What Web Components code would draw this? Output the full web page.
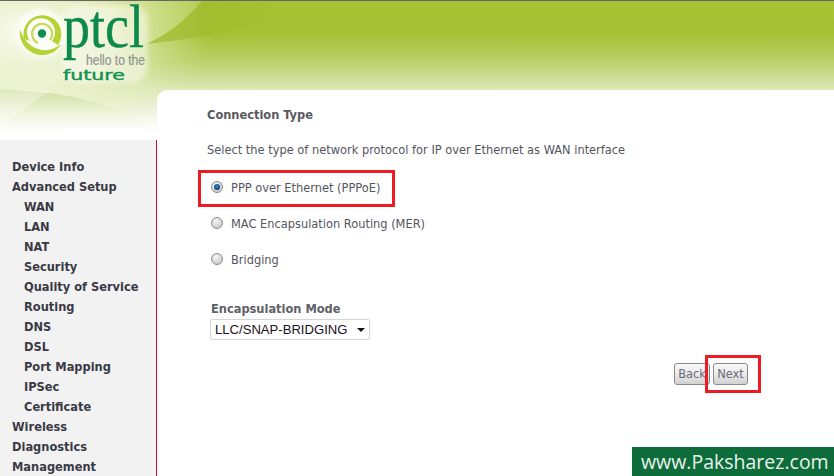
<!DOCTYPE html>
<html>
<head>
<meta charset="utf-8">
<title>PTCL Connection Type</title>
<style>
html, body { margin: 0; height: 100%; overflow: hidden; background: #fff; }
</style>
</head>
<body>
<router-page>
  <ptcl-logo slot="logo"></ptcl-logo>
  <side-menu slot="menu">
    <menu-link>Device Info</menu-link>
    <menu-link>Advanced Setup</menu-link>
    <menu-link sub>WAN</menu-link>
    <menu-link sub>LAN</menu-link>
    <menu-link sub>NAT</menu-link>
    <menu-link sub>Security</menu-link>
    <menu-link sub>Quality of Service</menu-link>
    <menu-link sub>Routing</menu-link>
    <menu-link sub>DNS</menu-link>
    <menu-link sub>DSL</menu-link>
    <menu-link sub>Port Mapping</menu-link>
    <menu-link sub>IPSec</menu-link>
    <menu-link sub>Certificate</menu-link>
    <menu-link>Wireless</menu-link>
    <menu-link>Diagnostics</menu-link>
    <menu-link>Management</menu-link>
  </side-menu>
  <connection-form slot="main"></connection-form>
</router-page>

<script>
// Page frame: green header behind, menu on the left, white panel on the right.
const pageTemplate = document.createElement('template')
pageTemplate.innerHTML = `
<style>
:host {
  display: grid;
  grid-template-columns: 157px 1fr;
  width: 834px;
  height: 476px;
  overflow: hidden;
  position: relative;
  box-sizing: border-box;
  border-top: 1px solid #666;
  font-family: "DejaVu Sans", Verdana, sans-serif;
  font-stretch: condensed;
  background: #fff;
}
#art { position: absolute; left: 0; top: 0; }
#left { display: flex; flex-direction: column; min-height: 0; position: relative; }
#head { height: 139px; flex: none; position: relative; }
#nav {
  flex: 1;
  min-height: 0;
  background: #f2f2f2;
  border-right: 1px solid #c8102e;
}
#panel {
  margin-top: 89px;
  background: #fff;
  border-top-left-radius: 10px;
  position: relative;
}
</style>
<svg id="art" width="834" height="135" viewBox="0 0 834 135">
  <defs>
    <linearGradient id="sky" x1="0" y1="0" x2="0" y2="1">
      <stop offset="0" stop-color="#a9c337"></stop>
      <stop offset=".24" stop-color="#a6c133"></stop>
      <stop offset=".45" stop-color="#bcd06a"></stop>
      <stop offset=".66" stop-color="#dfe8b8"></stop>
      <stop offset=".96" stop-color="#ffffff"></stop>
    </linearGradient>
    <radialGradient id="glow" gradientUnits="userSpaceOnUse" cx="0" cy="0" r="1"
      gradientTransform="translate(25 30) scale(185 105)">
      <stop offset="0" stop-color="#ffffff" stop-opacity=".95"></stop>
      <stop offset=".5" stop-color="#f6f9e2" stop-opacity=".72"></stop>
      <stop offset="1" stop-color="#e8f0c0" stop-opacity="0"></stop>
    </radialGradient>
    <linearGradient id="low" x1="0" y1="0" x2="0" y2="1">
      <stop offset="0" stop-color="#cfdc9c"></stop>
      <stop offset=".55" stop-color="#eef3d8"></stop>
      <stop offset="1" stop-color="#ffffff"></stop>
    </linearGradient>
    <linearGradient id="crescent" gradientUnits="userSpaceOnUse" x1="146" y1="0" x2="300" y2="0">
      <stop offset="0" stop-color="#99b524" stop-opacity=".65"></stop>
      <stop offset="1" stop-color="#99b524" stop-opacity="0"></stop>
    </linearGradient>
  </defs>
  <rect width="834" height="135" fill="url(#sky)"></rect>
  <path d="M146 43 C172 32 190 14 202 0 L130 0 L130 43 Z" fill="#c6d877" opacity=".5"></path>
  <rect width="300" height="135" fill="url(#glow)"></rect>
  <path d="M146 43 C172 32 190 14 202 0 L300 0 L300 8 C262 24 208 37 146 43 Z" fill="url(#crescent)"></path>
  <path d="M0 88 C60 90 120 102 157 130 L0 130 Z" fill="url(#low)"></path>
  <path d="M0 88 C22 88 36 89 50 90 C34 100 20 112 0 124 Z" fill="#ffffff" opacity=".35"></path>
</svg>
<div id="left">
  <div id="head"><slot name="logo"></slot></div>
  <div id="nav"><slot name="menu"></slot></div>
</div>
<div id="panel"><slot name="main"></slot></div>
<slot></slot>
`

customElements.define('router-page',
  /**
   * The whole router page.
   */
  class extends HTMLElement {
    constructor () {
      super()
      this.attachShadow({ mode: 'open' })
        .appendChild(pageTemplate.content.cloneNode(true))
    }
  }
)

// The logo. Swirl is drawn, the words stay real text.
const logoTemplate = document.createElement('template')
logoTemplate.innerHTML = `
<style>
:host { display: block; position: absolute; left: 0; top: 0; width: 157px; height: 90px; }
svg { display: block; overflow: visible; }
text { font-stretch: normal; }
.ptcl { font-family: "Liberation Serif", serif; font-size: 61px; fill: #0d8a4b; stroke: #0d8a4b; stroke-width: .4px; }
.hello { font-family: "Liberation Sans", sans-serif; font-size: 14px; fill: #8f9490; stroke: #8f9490; stroke-width: .2px; }
.future { font-family: "DejaVu Sans", sans-serif; font-size: 14px; fill: #11924f; stroke: #11924f; stroke-width: .4px; }
</style>
<svg width="157" height="90" viewBox="0 0 157 90">
  <defs>
    <filter id="blur" x="-20%" y="-20%" width="140%" height="140%">
      <feGaussianBlur stdDeviation="2.5"></feGaussianBlur>
    </filter>
  </defs>
  <circle cx="41" cy="32" r="24" fill="#fff" opacity=".8" filter="url(#blur)"></circle>
  <rect x="62" y="4" width="86" height="78" rx="16" fill="#fff" opacity=".45" filter="url(#blur)"></rect>
  <path d="M24 38 A19 19 0 1 1 58 44 L52 40 A14 14 0 1 0 30 40 Z" fill="#b5d334"></path>
  <path d="M20 28 C18 44 31 55 44 54 C52 53 58 49 61 43 C55 48 46 51 38 48 C29 45 23 38 20 28 Z" fill="#b5d334"></path>
  <path d="M38 42 A10 10 0 1 1 50 39" fill="none" stroke="#c5dc5a" stroke-width="2.2"></path>
  <circle cx="42" cy="32.5" r="4.2" fill="#0f8e4e"></circle>
  <text class="ptcl" x="63" y="45.5" textLength="81" lengthAdjust="spacingAndGlyphs">ptcl</text>
  <text class="hello" x="86" y="64" textLength="59" lengthAdjust="spacingAndGlyphs">hello to the</text>
  <text class="future" x="63" y="79" textLength="62" lengthAdjust="spacingAndGlyphs">future</text>
</svg>
`

customElements.define('ptcl-logo',
  /**
   * The ptcl logo.
   */
  class extends HTMLElement {
    constructor () {
      super()
      this.attachShadow({ mode: 'open' })
        .appendChild(logoTemplate.content.cloneNode(true))
    }
  }
)

customElements.define('side-menu',
  /**
   * Holds the menu links.
   */
  class extends HTMLElement {
    constructor () {
      super()
      this.attachShadow({ mode: 'open' }).innerHTML = `
        <style>
        :host { display: block; padding-top: 17px; }
        </style>
        <slot></slot>`
    }
  }
)

customElements.define('menu-link',
  /**
   * One line of the menu, sub items are indented.
   */
  class extends HTMLElement {
    constructor () {
      super()
      this.attachShadow({ mode: 'open' }).innerHTML = `
        <style>
        :host {
          display: block;
          height: 20px;
          padding-left: 12px;
          font: bold 12.7px/20px "DejaVu Sans", Verdana, sans-serif;
          font-stretch: condensed;
          color: #3a3a46;
          white-space: nowrap;
        }
        :host([sub]) { padding-left: 24px; }
        </style>
        <slot></slot>`
    }
  }
)

customElements.define('radio-row',
  /**
   * A radio button with its label.
   */
  class extends HTMLElement {
    constructor () {
      super()
      const checked = this.hasAttribute('checked')
      this.attachShadow({ mode: 'open' }).innerHTML = `
        <style>
        :host {
          display: flex;
          align-items: center;
          gap: 8px;
          height: 36px;
          padding-left: 4px;
          font-size: 12.7px;
          color: #555560;
        }
        svg { flex: none; }
        </style>
        <svg width="12" height="12" viewBox="0 0 12 12">
          <defs>
            <radialGradient id="g" cx=".4" cy=".3" r=".8">
              <stop offset="0" stop-color="#f4f4f4"></stop>
              <stop offset="1" stop-color="#c4c4c4"></stop>
            </radialGradient>
            <radialGradient id="d" cx=".45" cy=".4" r=".6">
              <stop offset="0" stop-color="#2b8fd0"></stop>
              <stop offset="1" stop-color="#0b3a68"></stop>
            </radialGradient>
          </defs>
          <circle cx="6" cy="6" r="5.5" fill="url(#g)" stroke="#8c8c8c"></circle>
          ${checked ? '<circle cx="6" cy="6" r="3" fill="url(#d)"></circle>' : ''}
        </svg>
        <slot></slot>`
    }
  }
)

// The form on the white panel.
const formTemplate = document.createElement('template')
formTemplate.innerHTML = `
<style>
:host { display: block; padding: 17px 0 0 50px; color: #555560; font-size: 12.7px; }
h1 { margin: 0; font: bold 12.7px/16px "DejaVu Sans", Verdana, sans-serif; font-stretch: condensed; color: #5a5a62; }
p { margin: 19px 0 0; line-height: 16px; }
#radios { margin-top: 11px; }
#encap { margin: 24px 0 0 3px; }
label { display: block; font-weight: bold; line-height: 16px; color: #5f6068; padding-left: 1px; }
#select {
  box-sizing: border-box;
  width: 160px;
  height: 21px;
  margin-top: 2px;
  padding-left: 4px;
  display: flex;
  align-items: center;
  justify-content: space-between;
  border: 1px solid #d5d5d5;
  border-radius: 2px;
  background: #fff;
  font: 13.1px "Liberation Sans", Arial, sans-serif;
  color: #1a1020;
  white-space: nowrap;
}
#select svg { margin-right: 4px; }
#buttons { display: flex; gap: 3px; justify-content: flex-end; margin: 23px 86px 0 0; }
</style>
<h1>Connection Type</h1>
<p>Select the type of network protocol for IP over Ethernet as WAN interface</p>
<div id="radios">
  <radio-row checked>PPP over Ethernet (PPPoE)</radio-row>
  <radio-row>MAC Encapsulation Routing (MER)</radio-row>
  <radio-row>Bridging</radio-row>
</div>
<div id="encap">
  <label>Encapsulation Mode</label>
  <div id="select">LLC/SNAP-BRIDGING
    <svg width="8" height="4" viewBox="0 0 8 4"><path d="M0 0h8L4 4z" fill="#111"></path></svg>
  </div>
</div>
<div id="buttons">
  <push-button>Back</push-button>
  <push-button>Next</push-button>
</div>
`

customElements.define('connection-form',
  /**
   * The connection type form.
   */
  class extends HTMLElement {
    constructor () {
      super()
      this.attachShadow({ mode: 'open' })
        .appendChild(formTemplate.content.cloneNode(true))
    }
  }
)

customElements.define('push-button',
  /**
   * Grey Back / Next button.
   */
  class extends HTMLElement {
    constructor () {
      super()
      this.attachShadow({ mode: 'open' }).innerHTML = `
        <style>
        :host {
          display: block;
          box-sizing: border-box;
          width: 36px;
          height: 22px;
          border: 1px solid #8a8a8a;
          border-radius: 3px;
          background: linear-gradient(180deg, #f8f8f8 0, #ececec 45%, #d2d2d2 100%);
          font: 12.7px/20px "DejaVu Sans", Verdana, sans-serif;
          font-stretch: condensed;
          color: #6b6b78;
          text-align: center;
          overflow: hidden;
        }
        :host(:last-child) { width: 35px; }
        </style>
        <slot></slot>`
    }
  }
)

customElements.define('red-mark',
  /**
   * Red annotation box drawn over the screenshot.
   */
  class extends HTMLElement {
    constructor () {
      super()
      const a = n => this.getAttribute(n)
      this.attachShadow({ mode: 'open' }).innerHTML = `
        <style>
        :host {
          position: fixed;
          left: ${a('x')}px;
          top: ${a('y')}px;
          width: ${a('w')}px;
          height: ${a('h')}px;
          box-sizing: border-box;
          border: 3px solid #ed1c24;
          z-index: 5;
        }
        </style>`
    }
  }
)

customElements.define('site-badge',
  /**
   * Watermark in the bottom right corner.
   */
  class extends HTMLElement {
    constructor () {
      super()
      this.attachShadow({ mode: 'open' }).innerHTML = `
        <style>
        :host {
          position: fixed;
          right: 0;
          bottom: 0;
          box-sizing: border-box;
          width: 202px;
          height: 29px;
          padding-left: 9px;
          background: #0e6b3a;
          color: #e8f2ec;
          font: 19.5px/29px "Open Sans", sans-serif;
          white-space: nowrap;
          z-index: 6;
        }
        </style>
        <slot></slot>`
    }
  }
)

document.body.insertAdjacentHTML('beforeend', `
  <red-mark x="198" y="170" w="197" h="37"></red-mark>
  <red-mark x="705" y="355" w="56" h="38"></red-mark>
  <site-badge>www.Paksharez.com</site-badge>
`)
</script>
</body>
</html>
